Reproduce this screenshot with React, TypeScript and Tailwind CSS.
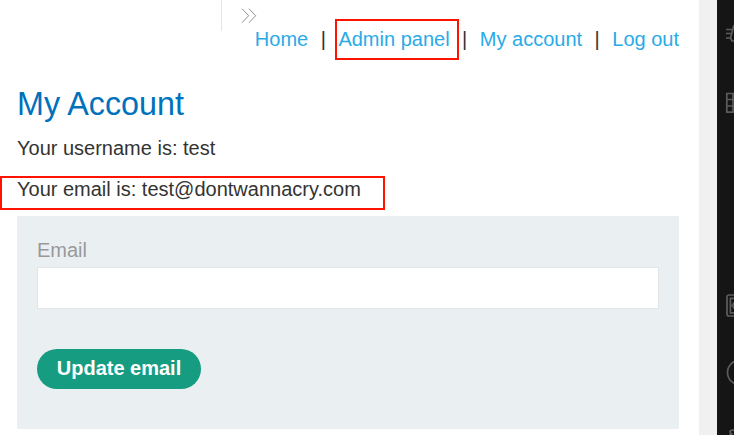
import React from "react";

const links = ["Home", "Admin panel", "My account", "Log out"];

function Nav() {
  return (
    <nav className="flex h-6 justify-end gap-[12.5px] whitespace-nowrap leading-6">
      {links.map((label, i) => (
        <React.Fragment key={label}>
          {i > 0 && <span>|</span>}
          <a href="#" className="relative text-[#29abe7]">
            {label}
            {label === "Admin panel" && (
              <span className="absolute -left-[3.5px] -top-2 h-[41px] w-[124px] border-2 border-[#ff1200]" />
            )}
          </a>
        </React.Fragment>
      ))}
    </nav>
  );
}

function Rail() {
  return (
    <aside className="w-[17px] shrink-0 overflow-hidden bg-[#151515]">
      <svg width="17" height="435" viewBox="0 0 17 435" fill="none" stroke="#5c5c5c" strokeWidth="1.7">
        <path d="M9 29.5h6M9 33.5h5M9 38h4M17 25l-3.5 13 1.5 3h2" />
        <path d="M17 93.5H9.8v18.7H17M9.8 99.5H17M9.8 106H17M16 93v19.3" />
        <rect x="10" y="295" width="20" height="21" rx="2" />
        <path d="M17 298.3h-3.6v14.6H17M13 305.5h2M17 302.5q-2 3 0 6" />
        <circle cx="22.5" cy="372.5" r="12" />
        <path d="M17 430.5q-3-1-4 1 .3 2 1.5 2.5l-2 1" />
      </svg>
    </aside>
  );
}

export default function App() {
  return (
    <div className="flex h-[435px] w-[734px] overflow-hidden bg-white font-['Liberation_Sans',Arial,sans-serif] text-xl text-[#333332]">
      <main className="w-[699px] shrink-0 pr-5">
        <header className="flex h-[27px]">
          <div className="h-[31px] w-[222px] shrink-0 border-r border-[#e4e4e4]" />
          <svg className="ml-[19px] mt-2 shrink-0" width="16" height="16" viewBox="0 0 16 16" fill="none" stroke="#909090" strokeWidth="1">
            <path d="M1 .7l6.7 7L1 14.7M8 .7l6.7 7-6.7 7" />
          </svg>
        </header>
        <Nav />
        <div className="pl-[17px]">
          <h1 className="mt-[33px] h-10 text-[32.3px] leading-10 text-[#0071bc]">My Account</h1>
          <p className="mt-3 h-6 leading-6">Your username is: test</p>
          <p className="relative mt-[17px] h-6 leading-6">
            Your email is: test@dontwannacry.com
            <span className="absolute -left-[17px] -top-px h-[34px] w-[385px] border-2 border-[#ff1200]" />
          </p>
          <form className="mt-[15px] h-[213px] bg-[#eaeff2] px-5 pt-[22px]" onSubmit={(e) => e.preventDefault()}>
            <label htmlFor="email" className="block h-6 leading-6 text-[#999999]">Email</label>
            <input id="email" type="email" className="mt-[5px] block h-[42px] w-full border border-[#e2e5e6] bg-white px-2 outline-none" />
            <button className="mt-10 block h-10 w-[164px] whitespace-nowrap rounded-full bg-[#169c80] pb-0.5 font-bold leading-[38px] text-white">
              Update email
            </button>
          </form>
        </div>
      </main>
      <div className="w-[18px] shrink-0 bg-[#f0f0f0]" />
      <Rail />
    </div>
  );
}
